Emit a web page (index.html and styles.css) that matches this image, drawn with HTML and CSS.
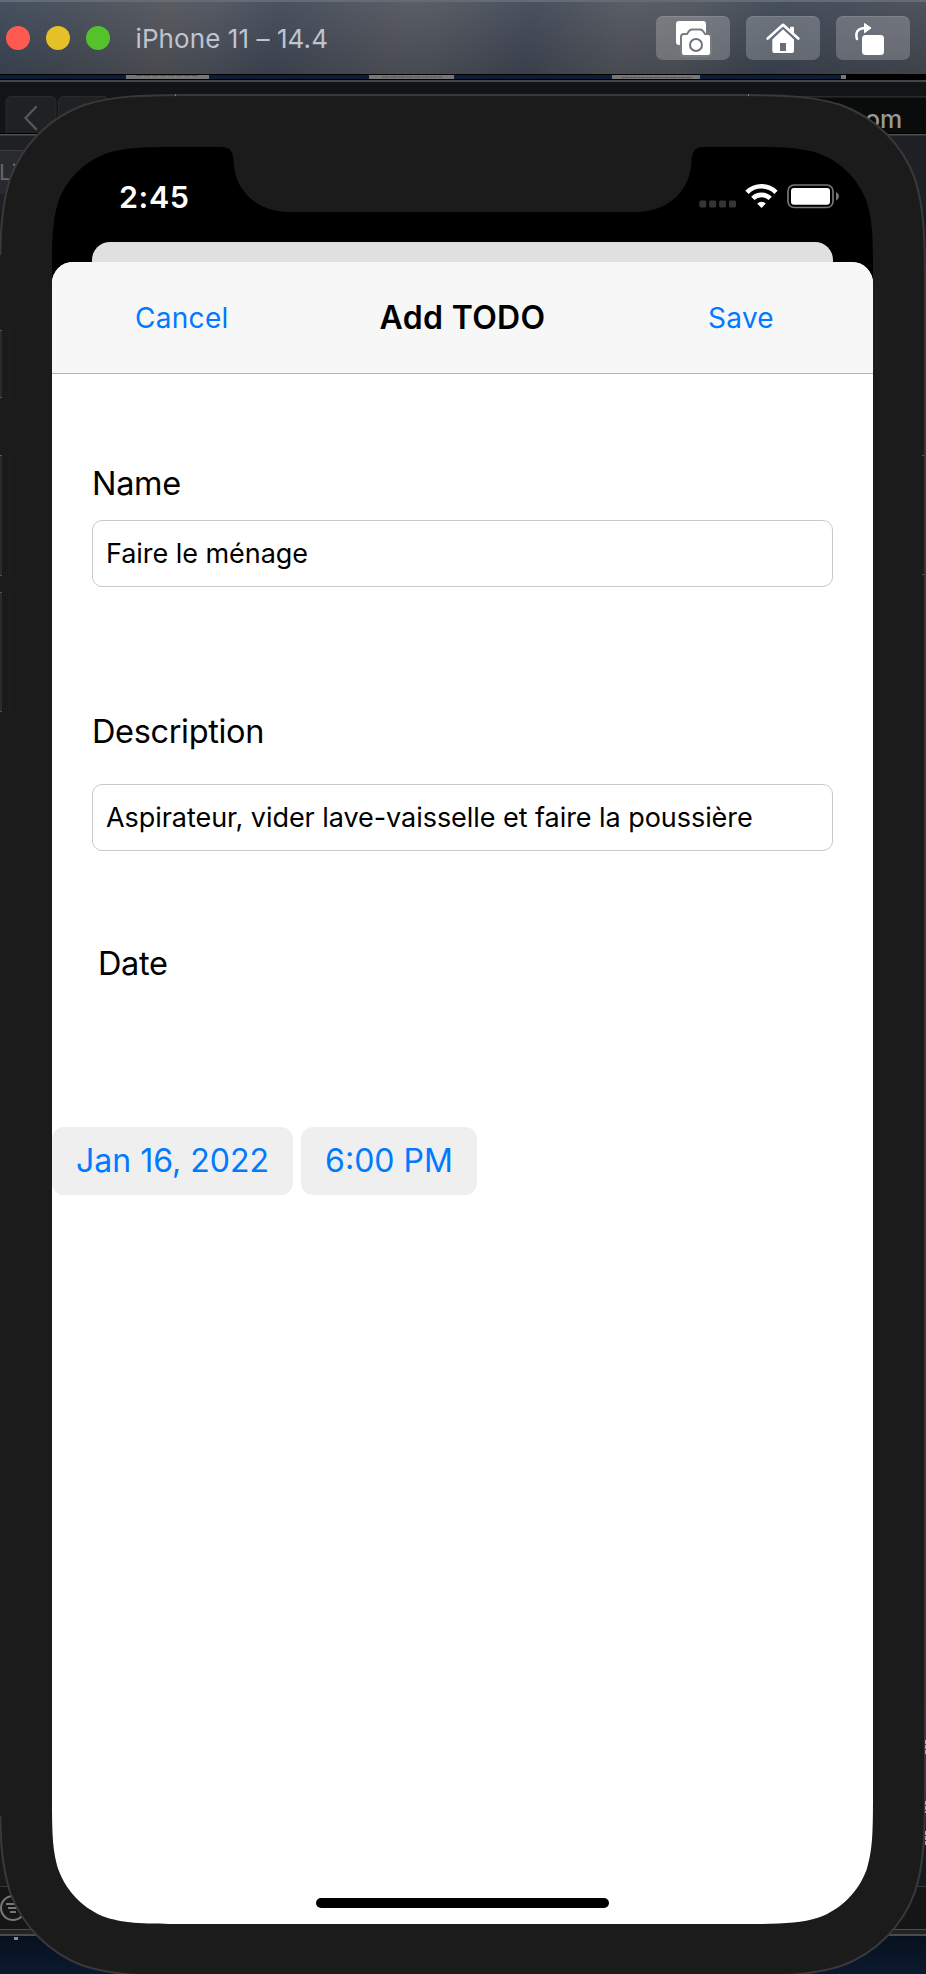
FILE: index.html
```html
<!DOCTYPE html>
<html lang="en">
<head>
<meta charset="utf-8">
<title>iPhone 11 – 14.4</title>
<link rel="stylesheet" href="styles.css">
</head>
<body>
<div class="window">
  <header class="titlebar">
    <div class="lights"><i class="light red"></i><i class="light yellow"></i><i class="light green"></i></div>
    <h1 class="window-title"><span>iPhone 11 – 14.4</span></h1>
    <div class="tools">
      <button class="tool" aria-label="Screenshot">
        <svg width="74" height="44" viewBox="0 0 74 44"><rect x="20" y="5" width="30" height="24" rx="3" fill="#fff"/><path d="M28 19h3.500l2-3q1-1.500 2.500-1.500h8q1.500 0 2.500 1.500l2 3H52q2 0 2 2v16q0 2-2 2H28q-2 0-2-2V21q0-2 2-2z" fill="#fff" stroke="#777c84" stroke-width="4" paint-order="stroke"/><circle cx="40" cy="29" r="6" fill="none" stroke="#6c727c" stroke-width="2"/></svg>
      </button>
      <button class="tool" aria-label="Home">
        <svg width="74" height="44" viewBox="0 0 74 44"><path d="M44 11.500q0-.8.8-.8h2.400q.8 0 .8.800V19l-4-4z" fill="#fff"/><path d="M21.700 22.500 37 8.800l15.300 13.700" fill="none" stroke="#fff" stroke-width="2.700" stroke-linecap="round" stroke-linejoin="round"/><path d="M37 13.300 48 23.500V35q0 2-2 2H28.300q-2 0-2-2V23.500z" fill="#fff"/><path d="M34 27h6v8h-6z" fill="#686d77"/></svg>
      </button>
      <button class="tool" aria-label="Rotate">
        <svg width="74" height="44" viewBox="0 0 74 44"><rect x="26" y="19" width="22" height="20" rx="3.500" fill="#fff"/><path d="M21 23q-3-10.500 8.500-11" fill="none" stroke="#fff" stroke-width="2.600" stroke-linecap="round"/><path d="M28.500 7.500 35 12l-6.500 4.800z" fill="#fff" stroke="#fff" stroke-linejoin="round"/></svg>
      </button>
    </div>
  </header>

  <main class="stage">
    <!-- Windows behind the simulator, then the device body -->
    <svg class="backdrop" width="926" height="1900" viewBox="0 74 926 1900" aria-hidden="true">
      <defs>
        <linearGradient id="sea" x2="0" y2="1"><stop stop-color="#07101e"/><stop offset="1" stop-color="#0a1a30"/></linearGradient>
      </defs>
      <path d="M0 74h926v1900H0z" fill="#191a1c"/>
      <path d="M0 74h926v6H0z" fill="#000"/>
      <path d="M0 75h841v4H0z" fill="#0c1b36"/>
      <path d="M126 75h83v4h-83zM369 75h85v4h-85zM612 75h88v4h-88zM841 75h5v4h-5z" fill="#777"/>
      <path d="M136 75.500h62M382 77h60M622 77.500h70" stroke="#555" stroke-dasharray="7 1"/>
      <path d="M0 80h926v2H0z" fill="#444547"/>
      <path d="M0 82h926v52H0z" fill="#131416"/>
      <path d="M730 97h196v37H730z" fill="#0a0b0b"/><path d="M730 96h196v1.500H730z" fill="#292a2b"/>
      <rect x="6" y="96.500" width="50" height="44" rx="5" fill="#202123" stroke="#292a2c"/>
      <rect x="58.500" y="96.500" width="50" height="44" rx="5" fill="#202123" stroke="#292a2c"/>
      <path d="M36 107 25.500 118 36 129" fill="none" stroke="#55565a" stroke-width="2.500" stroke-linecap="round" stroke-linejoin="round"/>
      <path d="M0 133h926v1H0z" fill="#000"/><path d="M0 134h926v1.500H0z" fill="#505153"/>
      <path d="M0 136h926v74H0z" fill="#1f2023"/><path d="M0 150h40v44H0z" fill="#292a2d"/><path d="M0 150h40v1H0z" fill="#3b3c3e"/>
      <text x="-1" y="180" class="back-label">Li</text>
      <text x="843" y="128" class="back-address">.com</text>
      <path d="M0 1886h926v1H0z" fill="#363739"/><path d="M0 1887h926v42H0z" fill="#151515"/>
      <path d="M0 1929h926v7H0z" fill="#222326"/><path d="M0 1929h926v1H0zM0 1934h926v2H0z" fill="#4a4b4d"/>
      <path d="M0 1936h926v38H0z" fill="url(#sea)"/>
      <path d="M14 1937h4v3h-4z" fill="#8b8b8b"/>
      <g fill="none" stroke="#77787a" stroke-width="2"><circle cx="13" cy="1908" r="12"/><path d="M6 1904h14M8 1908h10M10 1912h6"/></g>
      <path fill="#1b1b1b" stroke="#39393b" stroke-width="2" d="M190 95H735C785 95 812 96 841 105C875.400 117.500 902.500 144.600 915 179C924 208 925 235 925 285V1786C925 1836 924 1863 915 1892C902.500 1926.400 875.400 1953.500 841 1966C812 1975 785 1976 735 1976H190C140 1976 113 1975 84 1966C49.600 1953.500 22.500 1926.400 10 1892C1 1863 0 1836 0 1786V285C0 235 1 208 10 179C22.500 144.600 49.600 117.500 84 105C113 96 140 95 190 95Z"/>
      <path d="M0 255h2.500v1561H0z" fill="#1b1b1b"/>
      <path d="M175 94h1v2h-1zM748 94h1v2h-1z" fill="#777"/>
      <path d="M0 330h2v68H0zM0 455h2v120H0zM0 592h2v120H0z" fill="#2b2b2b"/>
      <path d="M0 330h2v1H0zM0 397h2v1H0zM0 455h2v1H0zM0 575h2v1H0zM0 592h2v1H0zM0 711h2v1H0zM922 455h4v1h-4zM922 574h4v1h-4z" fill="#555"/>
      <path d="M9.500 330v68M9.500 455v121M9.500 592v120" stroke="#202020"/>
      <path d="M925 270v1440" stroke="#383838" stroke-width="2"/>
      <path d="M925.500 1740v14M925.500 1801v12M925.500 1831v14" stroke="#aaa" stroke-dasharray="4 1"/>
    </svg>

    <section class="screen">
      <div class="status">
        <time class="clock"><span>2:45</span></time>
        <svg class="status-icons" width="142" height="26" viewBox="698 183 142 26" aria-label="Signal, Wi-Fi, battery">
          <g fill="#343434"><rect x="699.300" y="200.500" width="7" height="7" rx="1.500"/><rect x="709.200" y="200.500" width="7" height="7" rx="1.500"/><rect x="719.100" y="200.500" width="7" height="7" rx="1.500"/><rect x="729" y="200.500" width="7" height="7" rx="1.500"/></g>
          <path d="M747 192.300a20.500 20.500 0 0 1 29 0M752.800 198.400a12.500 12.500 0 0 1 17.400 0" fill="none" stroke="#fff" stroke-width="4.600"/>
          <path d="M761.500 208l-4.300-4.400q4.300-3.700 8.600 0z" fill="#fff"/>
          <rect x="788" y="185" width="45" height="22.500" rx="6" fill="none" stroke="#777" stroke-width="1.700"/>
          <rect x="791" y="188" width="39" height="16.700" rx="3" fill="#fff"/>
          <path d="M836 192q3 1.500 3 4.200t-3 4.200z" fill="#777"/>
        </svg>
      </div>
      <div class="card-behind"></div>
      <div class="sheet">
        <nav class="navbar">
          <a class="nav-action cancel"><span>Cancel</span></a>
          <h2 class="nav-title"><span>Add TODO</span></h2>
          <a class="nav-action save"><span>Save</span></a>
        </nav>
        <form class="form">
          <label class="label name-label"><span>Name</span></label>
          <div class="field name-field"><span>Faire le ménage</span></div>
          <label class="label desc-label"><span>Description</span></label>
          <div class="field desc-field"><span>Aspirateur, vider lave-vaisselle et faire la poussière</span></div>
          <label class="label date-label"><span>Date</span></label>
        </form>
        <div class="pickers">
          <div class="pill date-pill"><span>Jan 16, 2022</span></div>
          <div class="pill time-pill"><span>6:00 PM</span></div>
        </div>
        <div class="home-indicator"></div>
      </div>
    </section>
  </main>
</div>
</body>
</html>
```
FILE: styles.css
```css
* { box-sizing: border-box; }
body { margin: 0; background: #1b1b1b; font-family: Inter, "Liberation Sans", sans-serif; }
span { white-space: nowrap; }

.window { width: 926px; height: 1974px; overflow: hidden; display: flex; flex-direction: column; }

.titlebar {
  flex: none; height: 74px; padding: 0 16px 0 6px;
  display: flex; align-items: center;
  border-top: 2px solid #636b75;
  background:
    linear-gradient(180deg, rgba(255,255,255,.03), rgba(0,0,0,.16)),
    linear-gradient(100deg, #3f4b5b 0, #484f5a 8%, #55575d 18%, #505560 23%, #444c5a 30%, #555860 43%, #535860 47%, #444b59 57%, #555960 67%, #51565e 74%, #404957 83%, #4a4e57 100%);
}
.lights { display: flex; gap: 16px; }
.light { width: 24px; height: 24px; border-radius: 50%; }
.red { background: #ff5a52; }
.yellow { background: #e6c029; }
.green { background: #53c22b; }
.window-title { margin: 0 0 0 25.5px; padding-top: 2px; font-size: 26px; line-height: 32px; font-weight: 400; letter-spacing: .08px; color: #bfc4d0; }
.tools { margin-left: auto; display: flex; gap: 16px; }
.tool { width: 74px; height: 44px; padding: 0; border: 0; border-radius: 7px; background: rgba(255,255,255,.21); box-shadow: inset 0 1px rgba(255,255,255,.12); }
.tool svg { display: block; }

.stage { position: relative; height: 1900px; padding: 73px 0 0 52px; }
.backdrop { position: absolute; left: 0; top: 0; }
.back-label { font-size: 22px; fill: #66676a; }
.back-address { font-size: 25px; font-weight: 500; fill: #999; }

.screen {
  position: relative; width: 821px; height: 1777px; background: #000; display: flex; flex-direction: column;
  clip-path: path("M131.500 0H170Q181 0 181.500 13C182 44 205 65 238 65H583C616 65 639 44 639.500 13Q640 0 651 0H689.500C727.400 0 746.300 0 766.700 6.400C788.900 14.500 806.500 32.100 814.600 54.300C821 74.700 821 93.600 821 131.500V1645.500C821 1683.400 821 1702.300 814.600 1722.700C806.500 1744.900 788.900 1762.500 766.700 1770.600C746.300 1777 727.400 1777 689.500 1777H131.500C93.600 1777 74.700 1777 54.300 1770.600C32.100 1762.500 14.500 1744.900 6.400 1722.700C0 1702.300 0 1683.400 0 1645.500V131.500C0 93.600 0 74.700 6.400 54.300C14.500 32.100 32.100 14.500 54.300 6.400C74.700 0 93.600 0 131.500 0Z");
}
.status { height: 95px; flex: none; display: flex; justify-content: space-between; padding: 34px 33px 0 67px; color: #fff; }
.clock { font-size: 30.500px; line-height: 31px; font-weight: 600; letter-spacing: .6px; }
.status-icons { margin-top: 2px; }
.card-behind { flex: none; height: 20px; margin: 0 40px; border-radius: 18px 18px 0 0; background: #e0e0e0; }
.sheet { flex: 1; min-height: 0; border-radius: 21px 21px 0 0; background: #fff; display: flex; flex-direction: column; overflow: hidden; }
.navbar { flex: none; height: 112px; border-bottom: 1px solid #b2b2b2; background: #f7f7f7; display: grid; grid-template-columns: 250px 1fr 250px; align-items: center; }
.nav-action { font-size: 28px; line-height: 34px; letter-spacing: .3px; color: #007aff; padding-top: 1px; }
.cancel { padding-left: 83px; }
.save { padding-left: 85px; }
.nav-title { margin: 0; text-align: center; font-size: 32px; line-height: 38px; font-weight: 600; letter-spacing: .35px; color: #000; }
.form { display: flex; flex-direction: column; padding: 90px 40px 0; color: #000; }
.label { font-size: 32.500px; line-height: 40px; letter-spacing: -.35px; }
.field { height: 67px; border: 1px solid #c9c9c9; border-radius: 10px; padding: 1px 0 0 13px; display: flex; align-items: center; font-size: 27px; line-height: 32px; letter-spacing: -.05px; }
.name-field { margin-top: 16px; }
.desc-label { margin-top: 125px; }
.desc-field { margin-top: 32px; }
.date-label { margin: 93px 0 0 6px; }
.pickers { display: flex; gap: 8px; margin-top: 143px; }
.pill { height: 68px; border-radius: 12px; background: #efefef; display: flex; align-items: center; justify-content: center; font-size: 32px; line-height: 38px; color: #007aff; }
.date-pill { width: 241px; }
.time-pill { width: 176px; }
.home-indicator { flex: none; width: 293px; height: 10px; margin: auto auto 16px 264px; border-radius: 5px; background: #000; }
```
